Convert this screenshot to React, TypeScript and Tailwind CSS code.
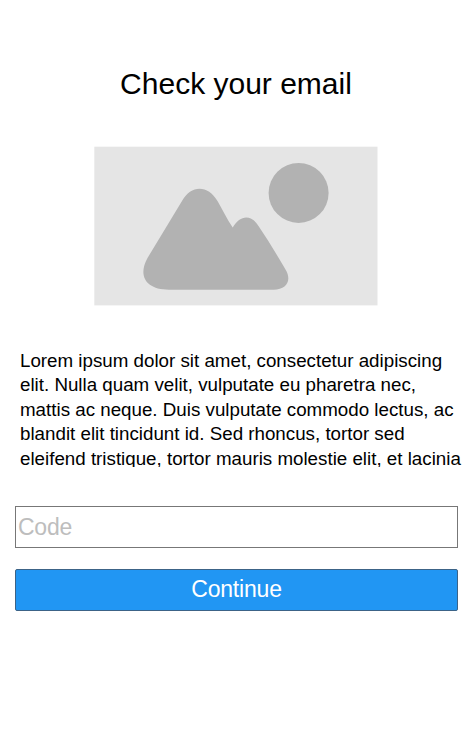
function Placeholder() {
  return (
    <svg className="mt-[42px] ml-[94px] block h-[160px] w-[284px]" viewBox="0 0 284 160" aria-hidden="true">
      <rect x="0.3" y="0.7" width="283.2" height="158.7" fill="#e5e5e5" />
      <circle cx="204.6" cy="46.9" r="30" fill="#b2b2b2" />
      <path
        d="M53.5 112 L88 55 C97 38.5 114 38.5 123.5 55 C128 63 133 73 138.7 81.6 C146 69 157 68 164.5 80 C174 94 183 109 191.5 123.5 C198 134 193 143.8 179.5 143.8 H75 C52 143.8 43.5 130 53.5 112 Z"
        fill="#b2b2b2"
      />
    </svg>
  );
}

export default function App() {
  return (
    <main className="flex h-[741px] w-[474px] flex-col overflow-hidden bg-white pt-[64px] font-['Liberation_Sans',Arial,sans-serif] text-black">
      <h1 className="mr-[2px] text-center text-[30px] leading-[40px]">Check your email</h1>
      <Placeholder />
      <p className="mt-[43px] ml-5 h-[118px] w-[450px] overflow-hidden text-[18.76px] leading-[24.45px] whitespace-nowrap">
        Lorem ipsum dolor sit amet, consectetur adipiscing
        <br />
        elit. Nulla quam velit, vulputate eu pharetra nec,
        <br />
        mattis ac neque. Duis vulputate commodo lectus, ac
        <br />
        blandit elit tincidunt id. Sed rhoncus, tortor sed
        <br />
        eleifend tristique, tortor mauris molestie elit, et lacinia
      </p>
      <input
        aria-label="Code"
        placeholder="Code"
        className="mt-[39px] ml-[15px] h-[42px] w-[443px] border border-[#777] px-[2px] text-[23px] tracking-[-0.25px] outline-none placeholder:text-[#bdbdbd]"
      />
      <button className="mt-[21px] ml-[15px] h-[42px] w-[443px] rounded-[2px] border border-[#3c6387] bg-[#2196f3] pb-[2px] text-[23px] leading-[38px] tracking-[-0.2px] text-white">
        Continue
      </button>
    </main>
  );
}
